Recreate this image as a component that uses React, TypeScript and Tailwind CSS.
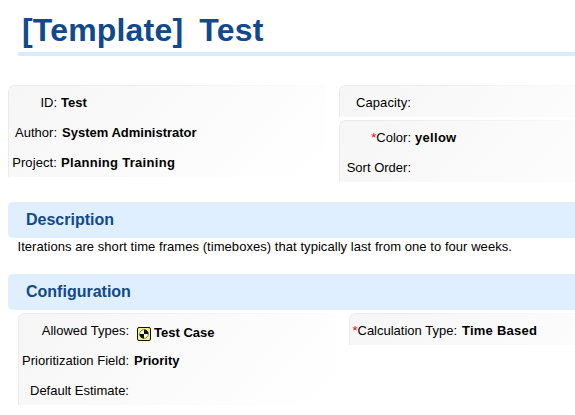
import type { ReactNode } from "react";

function Panel({ className, children }: { className: string; children: ReactNode }) {
  return (
    <div className={`relative overflow-hidden rounded-tl-[6px] bg-[linear-gradient(135deg,#f6f6f6,#ffffff_280px)] pt-[2px] ${className}`}>
      <div className="pointer-events-none absolute inset-0 rounded-tl-[6px] border-t border-l border-[#ebebeb] mask-r-from-20%" />
      {children}
    </div>
  );
}

function Row({ label, labelWidth, spacing = "", required, children }: {
  label: string;
  labelWidth: string;
  spacing?: string;
  required?: boolean;
  children?: ReactNode;
}) {
  return (
    <div className="flex h-[30px] items-center whitespace-nowrap">
      <div className={`flex shrink-0 justify-end ${labelWidth}`}>
        {required && <span className="text-[#f00]">*</span>}
        <span className={spacing}>{label}</span>
      </div>
      <div className="flex items-center pl-1 font-bold">{children}</div>
    </div>
  );
}

function SectionBar({ children }: { children: ReactNode }) {
  return (
    <h2 className="ml-2 flex h-9 items-center rounded-l-[5px] bg-[#dfefff] pb-[2px] pl-[18px] text-[16px] font-bold text-[#10498c]">
      {children}
    </h2>
  );
}

function TestCaseIcon() {
  return (
    <svg width="14" height="14" viewBox="0 0 14 14" className="mt-[8px] mr-[3px] ml-[4px]">
      <rect x="0.5" y="0.5" width="13" height="13" rx="1.5" fill="#f1f08c" stroke="#111" />
      <circle cx="7" cy="7" r="4.3" fill="#fffff0" stroke="#333" strokeWidth="0.6" />
      <path d="M7 7V2.5A4.5 4.5 0 0 1 11.5 7ZM7 7V11.5A4.5 4.5 0 0 1 2.5 7Z" fill="#111" />
    </svg>
  );
}

export default function App() {
  return (
    <div className="h-[415px] w-full overflow-hidden bg-white font-['Liberation_Sans',Arial,sans-serif] text-[13px] leading-[15px] text-black">
      <h1 className="ml-[18px] h-[56px] border-b-4 border-[#d9ebff] pt-[12px] pl-1 text-[32px] leading-[37px] font-bold tracking-[0.18px] [word-spacing:-1px] whitespace-pre text-[#10498c]">
        {"[Template]  Test"}
      </h1>

      <div className="mt-[29px] flex items-start pl-2">
        <Panel className="w-[318px]">
          <Row label="ID:" labelWidth="w-[49px]">Test</Row>
          <Row label="Author:" labelWidth="w-[49px]"><span className="ml-px">System Administrator</span></Row>
          <Row label="Project:" labelWidth="w-[49px]" spacing="tracking-[0.1px]"><span className="tracking-[0.3px]">Planning Training</span></Row>
        </Panel>
        <div className="ml-[13px] flex flex-1 flex-col gap-[3px]">
          <Panel className="w-full">
            <Row label="Capacity:" labelWidth="w-[72px]" spacing="tracking-[0.1px]" />
          </Panel>
          <Panel className="w-full">
            <Row label="Color:" labelWidth="w-[72px]" required><span className="tracking-[0.3px]">yellow</span></Row>
            <Row label="Sort Order:" labelWidth="w-[72px]" />
          </Panel>
        </div>
      </div>

      <div className="mt-5">
        <SectionBar>Description</SectionBar>
        <p className="h-9 pt-px pl-[17.5px] tracking-[0.052px] whitespace-nowrap">
          Iterations are short time frames (timeboxes) that typically last from one to four weeks.
        </p>
      </div>

      <SectionBar>Configuration</SectionBar>
      <div className="mt-[3px] flex items-start pl-[18px]">
        <Panel className="w-[318px]">
          <Row label="Allowed Types:" labelWidth="w-[111px]">
            <TestCaseIcon />
            <span className="mt-1">Test Case</span>
          </Row>
          <Row label="Prioritization Field:" labelWidth="w-[111px]"><span className="ml-px">Priority</span></Row>
          <Row label="Default Estimate:" labelWidth="w-[111px]" />
        </Panel>
        <Panel className="ml-[13px] flex-1">
          <Row label="Calculation Type:" labelWidth="w-[108px]" required><span className="ml-px tracking-[0.24px]">Time Based</span></Row>
        </Panel>
      </div>
    </div>
  );
}
